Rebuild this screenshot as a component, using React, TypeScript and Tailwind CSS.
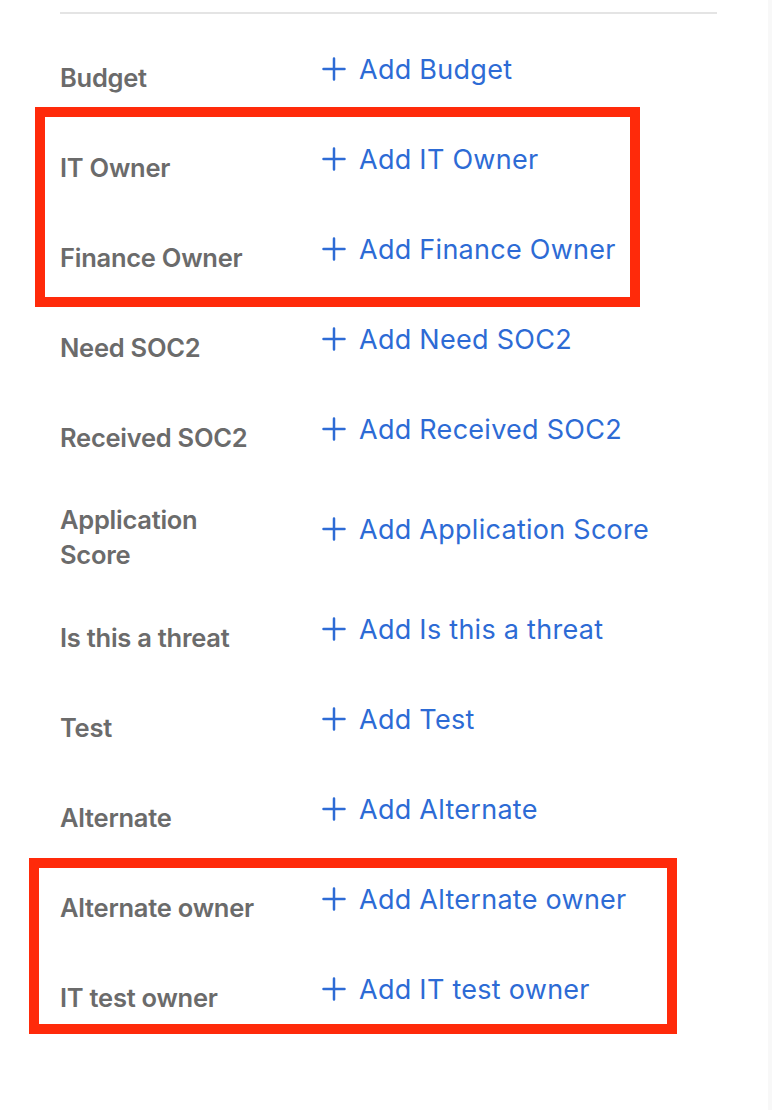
type Field = { label: string; action: string };

const topFields: Field[] = [{ label: "Budget", action: "Add Budget" }];

const ownerFields: Field[] = [
  { label: "IT Owner", action: "Add IT Owner" },
  { label: "Finance Owner", action: "Add Finance Owner" },
];

const middleFields: Field[] = [
  { label: "Need SOC2", action: "Add Need SOC2" },
  { label: "Received SOC2", action: "Add Received SOC2" },
  { label: "Application Score", action: "Add Application Score" },
  { label: "Is this a threat", action: "Add Is this a threat" },
  { label: "Test", action: "Add Test" },
  { label: "Alternate", action: "Add Alternate" },
];

const bottomFields: Field[] = [
  { label: "Alternate owner", action: "Add Alternate owner" },
  { label: "IT test owner", action: "Add IT test owner" },
];

function PlusIcon() {
  return (
    <svg width="24" height="24" viewBox="0 0 24 24" fill="none" className="shrink-0">
      <path d="M1.5 12h21M12 1.5v21" stroke="currentColor" strokeWidth="2.5" strokeLinecap="round" />
    </svg>
  );
}

function FieldRow({ label, action }: Field) {
  return (
    <div className="flex min-h-[90px] items-center py-3">
      <div className="w-[262px] shrink-0 pr-[57px] pt-4 text-[25.5px] font-semibold leading-[35px] tracking-[-0.01em] text-[#6b6b6b]">
        {label}
      </div>
      <button className="flex items-center gap-[13px] text-[27px] leading-[35px] tracking-[0.01em] text-[#2d6bd5]">
        <PlusIcon />
        <span>{action}</span>
      </button>
    </div>
  );
}

function Highlight({
  fields,
  className,
}: {
  fields: Field[];
  className: string;
}) {
  return (
    <div className="relative">
      {fields.map((f) => (
        <FieldRow key={f.label} {...f} />
      ))}
      <div className={`pointer-events-none absolute border-[10px] border-[#ff2a0a] ${className}`} />
    </div>
  );
}

export default function App() {
  return (
    <div
      className="min-h-[1110px] w-[772px] border-r-4 border-[#f8f8f8] bg-white pb-16 pl-[60px] pr-[51px] pt-3"
      style={{ fontFamily: "Inter, 'Noto Sans', sans-serif" }}
    >
      <div className="h-[2px] bg-[#e4e4e4]" />
      <div className="mt-[10px]">
        {topFields.map((f) => (
          <FieldRow key={f.label} {...f} />
        ))}
        <Highlight fields={ownerFields} className="-left-[25px] -top-[7px] right-[77px] -bottom-[13px]" />
        {middleFields.map((f) => (
          <FieldRow key={f.label} {...f} />
        ))}
        <Highlight fields={bottomFields} className="-left-[31px] top-[4px] right-[40px] bottom-0" />
      </div>
    </div>
  );
}
